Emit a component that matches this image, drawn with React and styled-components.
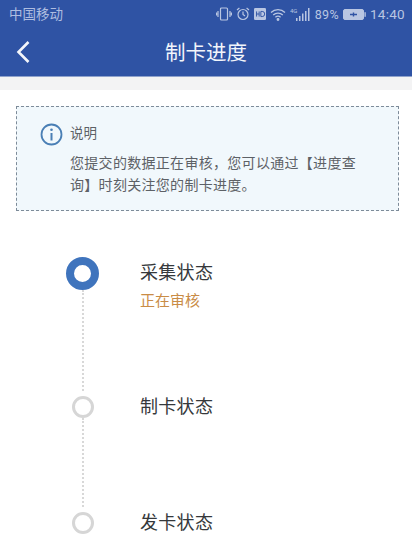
import React from 'react';
import styled, { createGlobalStyle } from 'styled-components';

const CJK = '"Noto Sans CJK SC", "Noto Sans", sans-serif';

const Global = createGlobalStyle`
    html, body {
        margin: 0;
        padding: 0;
        background: #ffffff;
        overflow: hidden;
    }
    body {
        font-family: ${CJK};
    }
`;

const Page = styled.div`
    width: 412px;
    height: 537px;
    overflow: hidden;
    background: #ffffff;
`;

const Header = styled.header`
    height: 76px;
    background: #2f53a4;
    border-bottom: 1px solid #8fa2cc;
    color: #ffffff;
`;

const StatusBar = styled.div`
    height: 28px;
    display: flex;
    align-items: center;
    justify-content: space-between;
    padding: 0 7px 0 9px;
    color: #b9c6e2;
    font-size: 12px;
`;

const Carrier = styled.span`
    font-size: 13.5px;
    color: #aebde0;
    margin-top: -2px;
`;

const StatusRight = styled.div`
    display: flex;
    align-items: center;
    gap: 4px;
`;

const StatusText = styled.span`
    font-family: "Roboto", sans-serif;
    font-size: ${p => p.$size || 12}px;
    color: #b9c6e2;
    letter-spacing: 0.3px;
`;

const NavBar = styled.div`
    height: 48px;
    display: flex;
    align-items: center;
    justify-content: center;
    position: relative;
`;

const BackIcon = styled.svg`
    position: absolute;
    left: 16px;
    top: 12px;
`;

const NavTitle = styled.h1`
    margin: 0 0 2px;
    font-size: 20.5px;
    font-weight: 400;
    color: #f2f5fb;
`;

const Strip = styled.div`
    height: 13px;
    background: #f3f3f4;
`;

const Notice = styled.section`
    margin: 16px 13px 0 16px;
    height: 105px;
    box-sizing: border-box;
    border: 1px dashed #7d8b99;
    background: #f1f8fc;
    padding: 13px 20px 0 23px;
    display: grid;
    grid-template-columns: 23px 1fr;
    column-gap: 7px;
`;

const InfoIcon = styled.svg`
    margin-top: 3px;
`;

const NoticeBody = styled.div`
    color: #5d6166;
`;

const NoticeTitle = styled.div`
    font-size: 13.5px;
    line-height: 24px;
    margin-bottom: 7px;
`;

const NoticeText = styled.p`
    margin: 0;
    font-size: 14px;
    letter-spacing: 0.3px;
    line-height: 22px;
    width: 295px;
`;

const Steps = styled.ol`
    list-style: none;
    margin: 46px 0 0;
    padding: 0 0 0 66px;
`;

const Step = styled.li`
    display: grid;
    grid-template-columns: 33px 1fr;
    column-gap: 41px;
    height: ${p => p.$height}px;
`;

const Marker = styled.div`
    display: flex;
    flex-direction: column;
    align-items: center;
`;

const Dot = styled.span`
    box-sizing: border-box;
    flex: none;
    border-radius: 50%;
    background: #ffffff;
    width: ${p => (p.$active ? 33 : 22)}px;
    height: ${p => (p.$active ? 33 : 22)}px;
    border: ${p => (p.$active ? '8px solid #3f74bd' : '3px solid #d6d6d6')};
    margin-top: ${p => (p.$active ? 0 : 5)}px;
`;

const Connector = styled.span`
    flex: 1;
    border-left: 2px dotted #d8d8d8;
`;

const StepName = styled.div`
    font-size: 18px;
    letter-spacing: 0.3px;
    line-height: 26px;
    color: #35383b;
    margin-top: 1px;
`;

const StepStatus = styled.div`
    font-size: 15px;
    line-height: 20px;
    margin-top: 6px;
    color: #c98c46;
`;

const steps = [
    { name: '采集状态', status: '正在审核', active: true, height: 134 },
    { name: '制卡状态', height: 116 },
    { name: '发卡状态', height: 40, last: true },
];

function StatusIcons() {
    return (
        <StatusRight>
            <svg width="16" height="14" viewBox="0 0 16 14" fill="none" stroke="#b9c6e2" strokeWidth="1.2">
                <rect x="4.5" y="1" width="7" height="12" rx="1" />
                <path d="M2 4v6M14 4v6M0.6 5.5v3M15.4 5.5v3" />
            </svg>
            <svg width="14" height="14" viewBox="0 0 14 14" fill="none" stroke="#b9c6e2" strokeWidth="1.2">
                <circle cx="7" cy="7.5" r="5" />
                <path d="M7 4.5v3l2 1.5M1 3l2.4-2M13 3l-2.4-2" />
            </svg>
            <svg width="12" height="12" viewBox="0 0 14 14">
                <rect width="14" height="14" rx="1.5" fill="#b9c6e2" />
                <path d="M3 4v6M6 4v6M3 7h3M8 4v6h1.5a3 3 0 0 0 0-6z" fill="none" stroke="#2f53a4" strokeWidth="1.1" />
            </svg>
            <svg width="16" height="13" viewBox="0 0 16 13" fill="none" stroke="#b9c6e2" strokeWidth="1.3">
                <path d="M1 4.5a10 10 0 0 1 14 0M3.2 7a7 7 0 0 1 9.6 0M5.4 9.3a4 4 0 0 1 5.2 0" />
                <circle cx="8" cy="11.5" r="0.8" fill="#b9c6e2" />
            </svg>
            <svg width="21" height="15" viewBox="0 0 21 15" fill="#b9c6e2">
                <text x="0" y="6" fontSize="6" fontFamily="Roboto, sans-serif">4G</text>
                <rect x="6" y="11" width="1.5" height="3" />
                <rect x="9" y="9" width="1.5" height="5" />
                <rect x="12" y="6.5" width="1.5" height="7.5" />
                <rect x="15" y="4" width="1.5" height="10" />
                <rect x="18" y="1" width="1.5" height="13" />
            </svg>
            <StatusText $size={12.5}>89%</StatusText>
            <svg width="23" height="11" viewBox="0 0 23 11">
                <rect x="0.5" y="0.5" width="20" height="10" rx="1.5" fill="#b9c6e2" stroke="#b9c6e2" />
                <rect x="21.4" y="3.2" width="1.4" height="4.6" fill="#b9c6e2" />
                <path d="M7 5.5h7M10.5 3.5v4" stroke="#2f53a4" strokeWidth="1.4" />
            </svg>
            <StatusText $size={13.5}>14:40</StatusText>
        </StatusRight>
    );
}

export default function App() {
    return (
        <Page>
            <Global />
            <Header>
                <StatusBar>
                    <Carrier>中国移动</Carrier>
                    <StatusIcons />
                </StatusBar>
                <NavBar>
                    <BackIcon width="14" height="24" viewBox="0 0 14 24" fill="none" stroke="#f4f6fb" strokeWidth="2.6">
                        <path d="M12.5 2L2.5 12l10 10" />
                    </BackIcon>
                    <NavTitle>制卡进度</NavTitle>
                </NavBar>
            </Header>
            <Strip />
            <Notice>
                <InfoIcon width="23" height="23" viewBox="0 0 23 23" fill="none">
                    <circle cx="11.5" cy="11.5" r="10" stroke="#4a7fb5" strokeWidth="1.8" />
                    <circle cx="11.5" cy="6.8" r="1.3" fill="#4a7fb5" />
                    <path d="M11.5 10v7.5" stroke="#4a7fb5" strokeWidth="2" />
                </InfoIcon>
                <NoticeBody>
                    <NoticeTitle>说明</NoticeTitle>
                    <NoticeText>您提交的数据正在审核，您可以通过【进度查询】时刻关注您的制卡进度。</NoticeText>
                </NoticeBody>
            </Notice>
            <Steps>
                {steps.map(step => (
                    <Step key={step.name} $height={step.height}>
                        <Marker>
                            <Dot $active={step.active} />
                            {!step.last && <Connector />}
                        </Marker>
                        <div>
                            <StepName>{step.name}</StepName>
                            {step.status && <StepStatus>{step.status}</StepStatus>}
                        </div>
                    </Step>
                ))}
            </Steps>
        </Page>
    );
}
